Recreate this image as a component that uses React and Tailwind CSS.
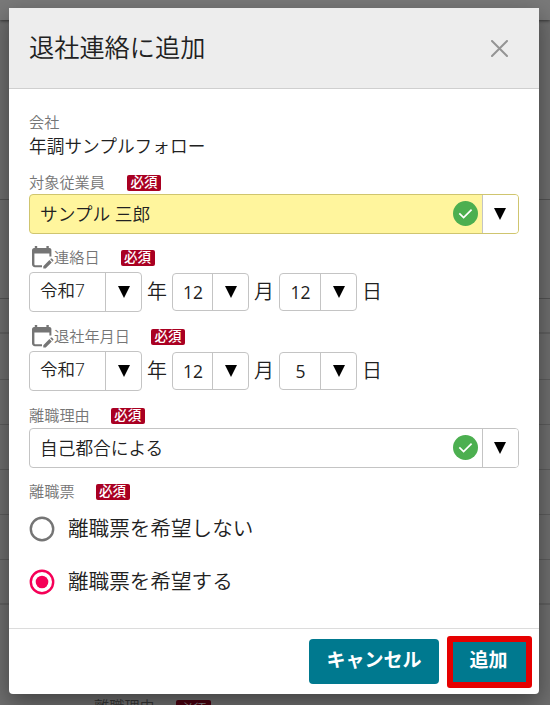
import React, { useState } from 'react';

const Required = ({ className = '' }) => (
  <span className={`flex h-4 w-[34px] items-center justify-center rounded-[2px] bg-[#a90022] text-[13.5px] font-medium leading-none text-white ${className}`}>
    必須
  </span>
);

const EditCalendar = () => (
  <svg viewBox="0 0 22 23" className="ml-[3px] h-[23px] w-[22px] shrink-0 fill-[#757575]">
    <path d="M2.800 0h2.400v2h9.200V0h2.400v2h.600c1.200 0 2 .8 2 2v6.500h-2V7.500H2.400V18c0 .9.300 1.200 1.200 1.200H10v2H3C1.200 21.200 0 20 0 18.300V4.300C0 3 .9 2 2.200 2h.6z" />
    <path d="M11.300 20.200l6.100-6.100 2.400 2.400-6.100 6.100h-2.400zM18.200 13.300l.700-.700c.300-.300.700-.300 1 0l1.400 1.400c.300.300.300.700 0 1l-.700.700z" />
  </svg>
);

const Valid = () => (
  <svg viewBox="0 0 25 25" className="mr-1 h-[25px] w-[25px] shrink-0">
    <circle cx="12.5" cy="12.5" r="12.5" fill="#4caf50" />
    <path d="M6.300 12.300l4.300 4.300 8-8" fill="none" stroke="#fff" strokeWidth="1.700" />
  </svg>
);

const Arrow = () => (
  <svg viewBox="0 0 12 12" className="h-3 w-3">
    <path d="M0 0h12L6 12z" />
  </svg>
);

const Select = ({ value, valid, filled }) => (
  <div className={`flex h-10 w-[490px] overflow-hidden rounded border text-[17.7px] ${filled ? 'border-[#cfc56f] bg-[#fff59d]' : 'border-[#c4c4c4] bg-white'}`}>
    <div className="flex flex-1 items-center pl-2.5 pt-px">{value}</div>
    <div className="flex items-center pb-px">{valid && <Valid />}</div>
    <button type="button" className="flex w-9 items-center justify-center border-l border-[#c4c4c4] bg-white pr-px">
      <Arrow />
    </button>
  </div>
);

const SmallSelect = ({ value, className }) => (
  <div className={`flex overflow-hidden rounded border border-[#c4c4c4] bg-white ${className}`}>
    <div className="flex flex-1 items-center justify-center pl-px pt-px font-normal">{value}</div>
    <button type="button" className="flex w-9 items-center justify-center border-l border-[#c4c4c4]">
      <Arrow />
    </button>
  </div>
);

const DateRow = ({ year, month, day }) => (
  <div className="flex h-10 items-center text-[20px]">
    <div className="flex h-10 w-[113px] overflow-hidden rounded border border-[#c4c4c4] bg-white text-[17.5px]">
      <div className="flex flex-1 items-center pb-0.5 pl-2.5">{year}</div>
      <button type="button" className="flex w-9 items-center justify-center border-l border-[#c4c4c4]">
        <Arrow />
      </button>
    </div>
    <span className="w-[30px] text-center">年</span>
    <SmallSelect value={month} className="h-[38px] w-[77px] text-[17.5px]" />
    <span className="w-[30px] text-center">月</span>
    <SmallSelect value={day} className="h-[38px] w-[78px] text-[17.5px]" />
    <span className="w-[30px] text-center">日</span>
  </div>
);

const Radio = ({ label, checked, onChange }) => (
  <label className="flex h-[53px] items-center gap-[13px] text-[20.6px]">
    <input type="radio" name="slip" checked={checked} onChange={onChange} className="sr-only" />
    <svg viewBox="0 0 26 26" className="h-[26px] w-[26px]" fill="none">
      <circle cx="13" cy="13" r="11.200" stroke={checked ? '#f50057' : '#757575'} strokeWidth="2.400" />
      {checked && <circle cx="13" cy="13" r="6.300" fill="#f50057" />}
    </svg>
    <span className="pb-px">{label}</span>
  </label>
);

const Backdrop = () => (
  <div className="absolute inset-0 flex flex-col bg-[#6e6e6e]">
    <div className="h-5 shrink-0 bg-[#797979] shadow-[0_1px_3px_#333]" />
    <div className="h-[180px] shrink-0 border-b border-[#535353]" />
    <div className="h-[99px] shrink-0 border-b border-[#535353]" />
    <div className="h-[35px] shrink-0 border-b-2 border-[#606060]" />
    <div className="h-[46px] shrink-0 border-b border-[#5c5c5c]" />
    <div className="h-[45px] shrink-0 border-b border-[#5c5c5c]" />
    <div className="h-[45px] shrink-0 border-b border-[#5c5c5c]" />
    <div className="h-[45px] shrink-0 border-b border-[#5c5c5c]" />
    <div className="h-[45px] shrink-0 border-b border-[#5c5c5c]" />
    <div className="h-[45px] shrink-0 border-b-2 border-[#606060]" />
    <div className="mt-[95px] flex h-4 shrink-0 items-center pl-[94px] text-[15.2px] text-[#343434]">
      <span className="pb-0.5">離職理由</span>
      <span className="ml-[21px] flex h-4 w-[35px] items-center justify-center rounded-[2px] bg-[#4a000f] text-[13px] text-[#888]">必須</span>
    </div>
  </div>
);

const labelClass = 'flex items-center text-[15.2px] text-[#757575]';

export default function App() {
  const [slip, setSlip] = useState(true);

  return (
    <div className="relative h-[705px] w-[550px] overflow-hidden font-['Open_Sans','Noto_Sans_CJK_JP',sans-serif] font-[350] leading-none text-[#212121]">
      <Backdrop />
      <div className="absolute left-[9px] top-2 flex h-[686px] w-[530px] flex-col overflow-hidden rounded-b bg-white shadow-[0_8px_22px_rgba(0,0,0,0.4)]">
        <div className="flex h-[81px] shrink-0 items-center justify-between border-b border-[#cfcfcf] bg-[#ededed] pl-5 pr-[31px]">
          <h1 className="pb-px text-[25.2px]">退社連絡に追加</h1>
          <button type="button">
            <svg viewBox="0 0 17 17" className="h-[17px] w-[17px]" fill="none" stroke="#949494" strokeWidth="2" strokeLinecap="round">
              <path d="M1 1l15 15M16 1L1 16" />
            </svg>
          </button>
        </div>

        <div className="flex flex-1 flex-col px-5 pt-6">
          <div className={`${labelClass} h-5`}>会社</div>
          <div className="flex h-7 items-center text-[17.7px]">年調サンプルフォロー</div>
          <div className={`${labelClass} mt-3 h-[19px]`}>
            対象従業員
            <Required className="ml-[22px]" />
          </div>
          <div className="h-0.5" />
          <Select value="サンプル 三郎" valid filled />

          <div className={`${labelClass} mt-[9px] h-[29px]`}>
            <EditCalendar />
            連絡日
            <Required className="ml-[21px]" />
          </div>
          <DateRow year="令和7" month="12" day="12" />

          <div className={`${labelClass} mt-2.5 h-[29px]`}>
            <EditCalendar />
            退社年月日
            <Required className="ml-[21px]" />
          </div>
          <DateRow year="令和7" month="12" day="5" />

          <div className={`${labelClass} mt-[13px] h-6`}>
            離職理由
            <Required className="ml-[21px]" />
          </div>
          <Select value="自己都合による" valid />

          <div className={`${labelClass} mt-3 h-[23px]`}>
            離職票
            <Required className="ml-[21px]" />
          </div>
          <div className="-mt-px">
            <Radio label="離職票を希望しない" checked={!slip} onChange={() => setSlip(false)} />
            <Radio label="離職票を希望する" checked={slip} onChange={() => setSlip(true)} />
          </div>
        </div>

        <div className="flex h-[66px] shrink-0 items-center justify-end gap-2 border-t border-[#dcdcdc] pr-[7px] text-[19px] font-bold text-white">
          <button type="button" className="h-[45px] w-[130px] rounded bg-[#00798f] pb-0.5">キャンセル</button>
          <button type="button" className="h-[52px] w-[85px] rounded-[3px] border-6 border-[#e60000] bg-[#00798f] pb-0.5 pr-0.5">追加</button>
        </div>
      </div>
    </div>
  );
}
